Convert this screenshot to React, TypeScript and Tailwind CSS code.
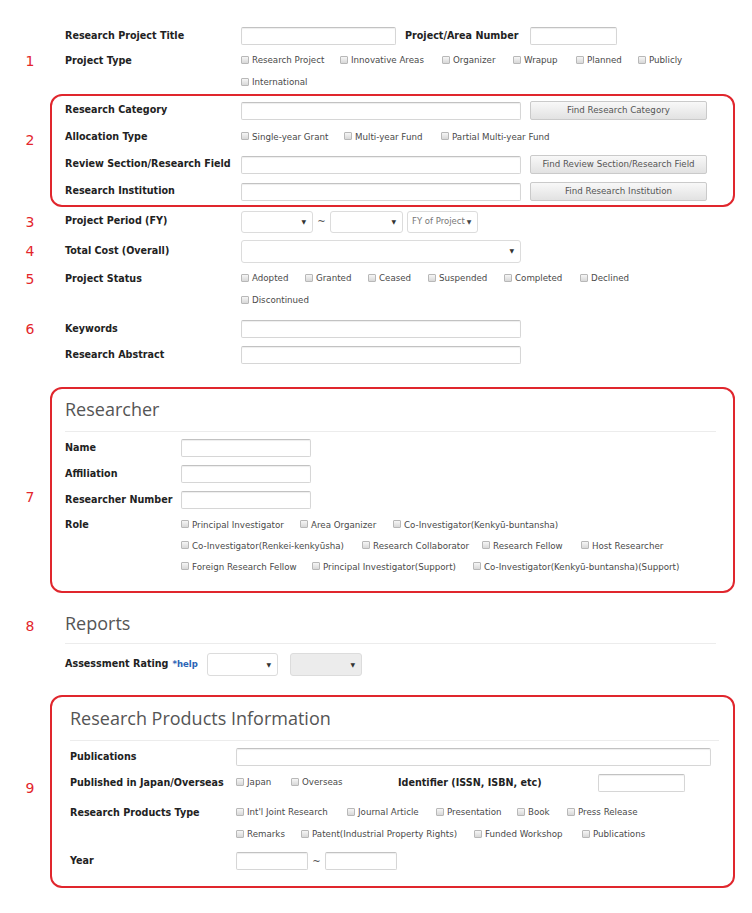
import type { ReactNode } from "react"

function Gutter({ n, className = "" }: { n?: string; className?: string }) {
  return (
    <div className={`w-[50px] shrink-0 pl-[10px] text-center text-[14px] leading-[16px] text-[#e3262c] ${className}`}>
      {n}
    </div>
  )
}

function Label({ children, className = "w-[176px]" }: { children: ReactNode; className?: string }) {
  return <div className={`shrink-0 whitespace-nowrap text-[9.6px] font-bold text-[#222] ${className}`}>{children}</div>
}

function TextInput({ className = "" }: { className?: string }) {
  return (
    <input
      type="text"
      className={`h-[18px] rounded-[2px] border border-[#d6d6d6] border-t-[#c2c2c2] bg-white shadow-[inset_0_1px_1px_rgba(0,0,0,0.07)] outline-none ${className}`}
    />
  )
}

function Select({ className = "", gray = false }: { className?: string; gray?: boolean }) {
  return (
    <div
      className={`flex shrink-0 items-center justify-end rounded-[3px] border border-[#dcdcdc] pr-[6px] ${gray ? "bg-[#ececec]" : "bg-white"} ${className}`}
    >
      <span className="text-[6px] leading-none text-[#333]">▼</span>
    </div>
  )
}

function FindButton({ children }: { children: ReactNode }) {
  return (
    <button className="ml-[9px] h-[19px] w-[177px] rounded-[2px] border border-[#cacaca] bg-linear-to-b from-[#f8f8f8] to-[#e2e2e2] text-[8.7px] text-[#555]">
      {children}
    </button>
  )
}

function Check({ label, className = "" }: { label: string; className?: string }) {
  return (
    <div className={`flex shrink-0 items-center ${className}`}>
      <span className="mr-[3px] h-[8px] w-[8px] -translate-y-[1px] rounded-[1px] border border-[#b8b8b8] bg-linear-to-b from-[#f6f6f6] to-[#d8d8d8]" />
      <span className="whitespace-nowrap text-[8.7px] text-[#4a4a4a]">{label}</span>
    </div>
  )
}

function Heading({ children }: { children: ReactNode }) {
  return (
    <h2 className="h-[24px] font-['Open_Sans',sans-serif] text-[18px] leading-[24px] text-[#555]">{children}</h2>
  )
}

export default function App() {
  return (
    <div className="min-h-[913px] w-[752px] bg-white pt-[22px] font-['DejaVu_Sans',Verdana,sans-serif] text-[#222]">
      {/* Research Project Title */}
      <div className="flex h-[28px] items-center">
        <Gutter />
        <div className="flex items-center pl-[15px]">
          <Label>Research Project Title</Label>
          <TextInput className="w-[155px]" />
          <Label className="ml-[9px] w-[125px]">Project/Area Number</Label>
          <TextInput className="w-[87px]" />
        </div>
      </div>

      {/* Project Type */}
      <div className="flex">
        <Gutter n="1" className="flex h-[22px] items-center justify-center" />
        <div className="flex pl-[15px]">
          <Label className="flex h-[22px] w-[176px] items-center">Project Type</Label>
          <div>
            <div className="flex h-[22px] items-center">
              <Check className="w-[99px]" label="Research Project" />
              <Check className="w-[102px]" label="Innovative Areas" />
              <Check className="w-[71px]" label="Organizer" />
              <Check className="w-[63px]" label="Wrapup" />
              <Check className="w-[62px]" label="Planned" />
              <Check label="Publicly" />
            </div>
            <div className="flex h-[22px] items-center">
              <Check label="International" />
            </div>
          </div>
        </div>
      </div>

      {/* Box 2 */}
      <div className="flex">
        <Gutter n="2" className="pt-[38px]" />
        <div className="w-[685px] rounded-[12px] border-2 border-[#e0262d] px-[13px] pt-[1px]">
          <div className="flex h-[27px] items-center">
            <Label>Research Category</Label>
            <TextInput className="w-[280px]" />
            <FindButton>Find Research Category</FindButton>
          </div>
          <div className="flex h-[27px] items-center">
            <Label>Allocation Type</Label>
            <Check className="w-[103px]" label="Single-year Grant" />
            <Check className="w-[97px]" label="Multi-year Fund" />
            <Check label="Partial Multi-year Fund" />
          </div>
          <div className="flex h-[27px] items-center">
            <Label>Review Section/Research Field</Label>
            <TextInput className="w-[280px]" />
            <FindButton>Find Review Section/Research Field</FindButton>
          </div>
          <div className="flex h-[27px] items-center">
            <Label>Research Institution</Label>
            <TextInput className="w-[280px]" />
            <FindButton>Find Research Institution</FindButton>
          </div>
        </div>
      </div>

      {/* Project Period */}
      <div className="flex h-[29px] items-center">
        <Gutter n="3" />
        <div className="flex items-center pl-[15px]">
          <Label>Project Period (FY)</Label>
          <Select className="h-[22px] w-[72px]" />
          <span className="w-[17px] text-center text-[10px] text-[#555]">~</span>
          <Select className="h-[22px] w-[73px]" />
          <div className="ml-[4px] flex h-[22px] w-[71px] items-center rounded-[3px] border border-[#dcdcdc] pl-[4px] text-[8.5px] text-[#777]">
            FY of Project <span className="ml-[2px] text-[6px] text-[#444]">▼</span>
          </div>
        </div>
      </div>

      {/* Total Cost */}
      <div className="flex h-[30px] items-center">
        <Gutter n="4" />
        <div className="flex items-center pl-[15px]">
          <Label>Total Cost (Overall)</Label>
          <Select className="h-[23px] w-[280px]" />
        </div>
      </div>

      {/* Project Status */}
      <div className="flex pt-[2px]">
        <Gutter n="5" className="flex h-[22px] items-center justify-center" />
        <div className="flex pl-[15px]">
          <Label className="flex h-[22px] w-[176px] items-center">Project Status</Label>
          <div>
            <div className="flex h-[22px] items-center">
              <Check className="w-[64px]" label="Adopted" />
              <Check className="w-[63px]" label="Granted" />
              <Check className="w-[60px]" label="Ceased" />
              <Check className="w-[76px]" label="Suspended" />
              <Check className="w-[76px]" label="Completed" />
              <Check label="Declined" />
            </div>
            <div className="flex h-[22px] items-center">
              <Check label="Discontinued" />
            </div>
          </div>
        </div>
      </div>

      {/* Keywords */}
      <div className="mt-[4px] flex h-[26px] items-center">
        <Gutter n="6" />
        <div className="flex items-center pl-[15px]">
          <Label>Keywords</Label>
          <TextInput className="w-[280px]" />
        </div>
      </div>
      <div className="flex h-[26px] items-center">
        <Gutter />
        <div className="flex items-center pl-[15px]">
          <Label>Research Abstract</Label>
          <TextInput className="w-[280px]" />
        </div>
      </div>

      {/* Researcher */}
      <div className="mt-[19px] flex">
        <Gutter n="7" className="pt-[102px]" />
        <div className="w-[685px] rounded-[12px] border-2 border-[#e0262d] pb-[13px] pl-[13px] pr-[17px]">
          <div className="border-b border-[#ececec] pb-[10px] pt-[8px]">
            <Heading>Researcher</Heading>
          </div>
          <div className="mt-[3px] flex h-[26px] items-center">
            <Label className="w-[116px]">Name</Label>
            <TextInput className="w-[130px]" />
          </div>
          <div className="flex h-[26px] items-center">
            <Label className="w-[116px]">Affiliation</Label>
            <TextInput className="w-[130px]" />
          </div>
          <div className="flex h-[26px] items-center">
            <Label className="w-[116px]">Researcher Number</Label>
            <TextInput className="w-[130px]" />
          </div>
          <div className="mt-[2px] flex">
            <Label className="flex h-[21px] w-[116px] items-center">Role</Label>
            <div>
              <div className="flex h-[21px] items-center">
                <Check className="w-[119px]" label="Principal Investigator" />
                <Check className="w-[93px]" label="Area Organizer" />
                <Check label="Co-Investigator(Kenkyū-buntansha)" />
              </div>
              <div className="flex h-[21px] items-center">
                <Check className="w-[181px]" label="Co-Investigator(Renkei-kenkyūsha)" />
                <Check className="w-[120px]" label="Research Collaborator" />
                <Check className="w-[99px]" label="Research Fellow" />
                <Check label="Host Researcher" />
              </div>
              <div className="flex h-[21px] items-center">
                <Check className="w-[131px]" label="Foreign Research Fellow" />
                <Check className="w-[161px]" label="Principal Investigator(Support)" />
                <Check label="Co-Investigator(Kenkyū-buntansha)(Support)" />
              </div>
            </div>
          </div>
        </div>
      </div>

      {/* Reports */}
      <div className="mt-[18px] flex">
        <Gutter n="8" className="flex h-[24px] items-center justify-center pt-[6px]" />
        <div className="ml-[15px] w-[651px]">
          <div className="border-b border-[#ececec] pb-[8px]">
            <Heading>Reports</Heading>
          </div>
          <div className="mt-[9px] flex h-[23px] items-center">
            <div className="flex w-[142px] shrink-0 items-center">
              <Label className="w-auto">Assessment Rating</Label>
              <span className="ml-[4px] text-[8.5px] font-bold text-[#2b63b5]">*help</span>
            </div>
            <Select className="h-[23px] w-[71px]" />
            <Select gray className="ml-[12px] h-[23px] w-[72px]" />
          </div>
        </div>
      </div>

      {/* Research Products Information */}
      <div className="mt-[19px] flex">
        <Gutter n="9" className="pt-[85px]" />
        <div className="w-[685px] rounded-[12px] border-2 border-[#e0262d] pb-[12px] pl-[18px] pr-[14px]">
          <div className="border-b border-[#ececec] pb-[10px] pt-[9px]">
            <Heading>Research Products Information</Heading>
          </div>
          <div className="mt-[3px] flex h-[26px] items-center">
            <Label className="w-[166px]">Publications</Label>
            <TextInput className="w-[475px]" />
          </div>
          <div className="flex h-[26px] items-center">
            <Label className="w-[166px]">Published in Japan/Overseas</Label>
            <div className="flex w-[162px] shrink-0 items-center">
              <Check className="w-[55px]" label="Japan" />
              <Check label="Overseas" />
            </div>
            <Label className="w-[200px]">Identifier (ISSN, ISBN, etc)</Label>
            <TextInput className="w-[87px]" />
          </div>
          <div className="mt-[6px] flex">
            <Label className="flex h-[22px] w-[166px] items-center">Research Products Type</Label>
            <div>
              <div className="flex h-[22px] items-center">
                <Check className="w-[111px]" label="Int'l Joint Research" />
                <Check className="w-[89px]" label="Journal Article" />
                <Check className="w-[81px]" label="Presentation" />
                <Check className="w-[50px]" label="Book" />
                <Check label="Press Release" />
              </div>
              <div className="flex h-[22px] items-center">
                <Check className="w-[65px]" label="Remarks" />
                <Check className="w-[173px]" label="Patent(Industrial Property Rights)" />
                <Check className="w-[108px]" label="Funded Workshop" />
                <Check label="Publications" />
              </div>
            </div>
          </div>
          <div className="mt-[2px] flex h-[26px] items-center">
            <Label className="w-[166px]">Year</Label>
            <TextInput className="w-[72px]" />
            <span className="w-[17px] text-center text-[10px] text-[#555]">~</span>
            <TextInput className="w-[72px]" />
          </div>
        </div>
      </div>
    </div>
  )
}
